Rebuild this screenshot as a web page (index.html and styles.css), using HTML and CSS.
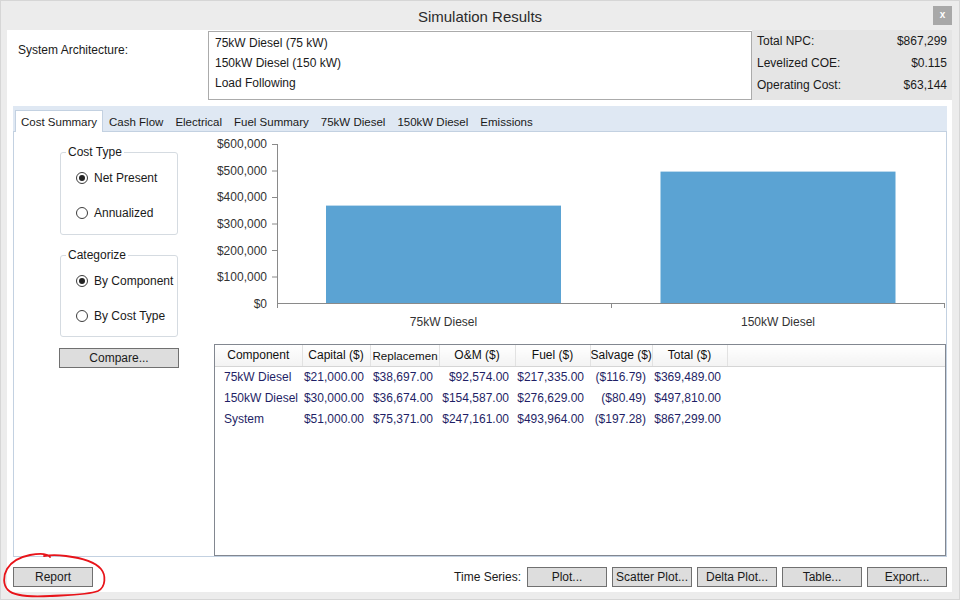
FILE: index.html
```html
<!DOCTYPE html>
<html>
<head>
<meta charset="utf-8">
<title>Simulation Results</title>
<link rel="stylesheet" href="styles.css">
</head>
<body>
<div class="window">
  <div class="titlebar">
    <span></span>
    <div class="title">Simulation Results</div>
    <div class="close">x</div>
  </div>
  <div class="panel">
    <div class="top">
      <div class="arch-label">System Architecture:</div>
      <div class="arch-box">
        <div class="arch-line">75kW Diesel (75 kW)</div>
        <div class="arch-line">150kW Diesel (150 kW)</div>
        <div class="arch-line">Load Following</div>
      </div>
      <div class="summary">
        <div class="srow"><span>Total NPC:</span><span>$867,299</span></div>
        <div class="srow"><span>Levelized COE:</span><span>$0.115</span></div>
        <div class="srow"><span>Operating Cost:</span><span>$63,144</span></div>
      </div>
    </div>
    <div class="tabs">
      <div class="tabstrip">
        <div class="tab active">Cost Summary</div>
        <div class="tab">Cash Flow</div>
        <div class="tab">Electrical</div>
        <div class="tab">Fuel Summary</div>
        <div class="tab">75kW Diesel</div>
        <div class="tab">150kW Diesel</div>
        <div class="tab">Emissions</div>
      </div>
      <div class="tabcontent">
        <div class="left">
          <fieldset class="group">
            <legend>Cost Type</legend>
            <div class="radio-row"><span class="radio checked"></span>Net Present</div>
            <div class="radio-row"><span class="radio"></span>Annualized</div>
          </fieldset>
          <fieldset class="group group2">
            <legend>Categorize</legend>
            <div class="radio-row"><span class="radio checked"></span>By Component</div>
            <div class="radio-row"><span class="radio"></span>By Cost Type</div>
          </fieldset>
          <div class="btn compare">Compare...</div>
        </div>
        <div class="right">
          <svg class="chart" width="732" height="212" viewBox="0 0 732 212">
            <g class="ylabels">
              <text x="53" y="12" dy=".35em">$600,000</text>
              <text x="53" y="38.6" dy=".35em">$500,000</text>
              <text x="53" y="65.2" dy=".35em">$400,000</text>
              <text x="53" y="91.8" dy=".35em">$300,000</text>
              <text x="53" y="118.4" dy=".35em">$200,000</text>
              <text x="53" y="145" dy=".35em">$100,000</text>
              <text x="53" y="171.5" dy=".35em">$0</text>
            </g>
            <rect class="bar" x="112" y="73.6" width="235" height="97.9"></rect>
            <rect class="bar" x="446.5" y="39.6" width="235" height="131.9"></rect>
            <g class="axis">
              <line x1="63.5" y1="12" x2="63.5" y2="176"></line>
              <line x1="63" y1="171.5" x2="731" y2="171.5"></line>
              <line x1="58" y1="12.5" x2="63" y2="12.5"></line>
              <line x1="58" y1="39" x2="63" y2="39"></line>
              <line x1="58" y1="65.5" x2="63" y2="65.5"></line>
              <line x1="58" y1="92" x2="63" y2="92"></line>
              <line x1="58" y1="118.5" x2="63" y2="118.5"></line>
              <line x1="58" y1="145" x2="63" y2="145"></line>
              <line x1="397.5" y1="171.5" x2="397.5" y2="176"></line>
              <line x1="730.5" y1="171.5" x2="730.5" y2="176"></line>
            </g>
            <g class="xlabels">
              <text x="229.5" y="190" dy=".35em">75kW Diesel</text>
              <text x="564" y="190" dy=".35em">150kW Diesel</text>
            </g>
          </svg>
          <div class="grid">
            <table>
              <colgroup>
                <col style="width:87px"><col style="width:68px"><col style="width:69px"><col style="width:76px"><col style="width:75px"><col style="width:62px"><col style="width:75px"><col>
              </colgroup>
              <thead>
                <tr>
                  <th>Component</th>
                  <th>Capital ($)</th>
                  <th class="clip"><div class="clipbox">Replacemen</div></th>
                  <th>O&amp;M ($)</th>
                  <th>Fuel ($)</th>
                  <th>Salvage ($)</th>
                  <th>Total ($)</th>
                  <th class="filler"></th>
                </tr>
              </thead>
              <tbody>
                <tr>
                  <td class="name">75kW Diesel</td>
                  <td>$21,000.00</td><td>$38,697.00</td><td>$92,574.00</td><td>$217,335.00</td><td>($116.79)</td><td>$369,489.00</td><td></td>
                </tr>
                <tr>
                  <td class="name">150kW Diesel</td>
                  <td>$30,000.00</td><td>$36,674.00</td><td>$154,587.00</td><td>$276,629.00</td><td>($80.49)</td><td>$497,810.00</td><td></td>
                </tr>
                <tr>
                  <td class="name">System</td>
                  <td>$51,000.00</td><td>$75,371.00</td><td>$247,161.00</td><td>$493,964.00</td><td>($197.28)</td><td>$867,299.00</td><td></td>
                </tr>
              </tbody>
            </table>
          </div>
        </div>
      </div>
    </div>
    <div class="bottombar">
      <div class="btn report">Report</div>
      <div class="spacer"></div>
      <div class="ts-label">Time Series:</div>
      <div class="btn ts">Plot...</div>
      <div class="btn ts">Scatter Plot...</div>
      <div class="btn ts">Delta Plot...</div>
      <div class="btn ts">Table...</div>
      <div class="btn ts">Export...</div>
    </div>
  </div>
  <svg class="annot" width="960" height="600" viewBox="0 0 960 600">
    <path d="M 50 557 C 47 553, 40 553, 30 555 C 20 557, 11 562, 7 569 C 3 576, 3 585, 8 590 C 14 596, 32 597, 50 596 C 68 595, 88 595, 98 591 C 106 587, 106 575, 101 569 C 95 562, 82 558, 66 556 C 58 555, 50 555, 44 556"/>
  </svg>
</div>
</body>
</html>
```

FILE: styles.css
```css
* { box-sizing: border-box; }

html, body {
  margin: 0;
  padding: 0;
}

body {
  font-family: "Liberation Sans", Arial, sans-serif;
  font-size: 12px;
  color: #111;
  background: #ececec;
}

.window {
  position: relative;
  width: 960px;
  height: 600px;
  border: 1px solid #d6d6d6;
  background: #ececec;
  display: flex;
  flex-direction: column;
}

.titlebar {
  height: 29px;
  display: grid;
  grid-template-columns: 1fr auto 1fr;
  align-items: center;
}

.title {
  font-size: 15px;
  color: #2b2b2b;
  padding-top: 1px;
}

.close {
  justify-self: end;
  align-self: start;
  margin-top: 5px;
  margin-right: 7px;
  width: 19px;
  height: 19px;
  background: #a8a8a8;
  color: #fff;
  font-size: 10px;
  font-weight: bold;
  line-height: 18px;
  text-align: center;
}

.panel {
  height: 562px;
  margin: 0 7px 7px 6px;
  background: #fff;
  display: flex;
  flex-direction: column;
}

/* top section */
.top {
  height: 70px;
  display: flex;
}

.arch-label {
  width: 201px;
  padding: 12px 0 0 11px;
  line-height: 16px;
  color: #1a1a1a;
}

.arch-box {
  width: 544px;
  height: 69px;
  margin-top: 1px;
  border: 1px solid #ababab;
  padding: 1px 6px;
}

.arch-line {
  line-height: 20px;
  color: #1a1a1a;
}

.summary {
  flex: 1;
  height: 70px;
  background: #e5e5e5;
  padding: 0 5px 4px 5px;
  display: grid;
  grid-template-rows: repeat(3, 1fr);
  align-items: center;
}

.srow {
  display: flex;
  justify-content: space-between;
  color: #1a1a1a;
}

/* tabs */
.tabs {
  flex: 1;
  margin: 6px 5px 0 6px;
  display: flex;
  flex-direction: column;
}

.tabstrip {
  height: 25px;
  background: #dfe8f3;
  display: flex;
  align-items: flex-end;
  padding-left: 2px;
}

.tab {
  height: 21px;
  padding: 2px 5px 0 5px;
  line-height: 18px;
  font-size: 11.5px;
  border: 1px solid transparent;
  border-bottom: none;
  color: #1a1a1a;
  white-space: nowrap;
}

.tab.active {
  background: #fff;
  border-color: #c3d1e1;
  height: 22px;
  margin-bottom: -1px;
  position: relative;
  z-index: 1;
}

.tabcontent {
  height: 426px;
  border: 1px solid #c3d1e1;
  background: #fff;
  display: flex;
}

.left {
  width: 200px;
  padding-top: 12px;
}

.group {
  margin: 0 0 0 46px;
  width: 118px;
  padding: 0 0 4px 0;
  border: 1px solid #d5dbe1;
  border-radius: 3px;
  min-width: 0;
}

.group legend {
  margin-left: 5px;
  padding: 0 2px;
  line-height: 16px;
  color: #1a1a1a;
}

.group2 {
  margin-top: 12px;
  padding-bottom: 3px;
}

.radio-row {
  height: 35px;
  display: flex;
  align-items: center;
  padding-left: 15px;
  color: #1a1a1a;
  white-space: nowrap;
}

.radio {
  width: 12px;
  height: 12px;
  border: 1px solid #3c3c3c;
  border-radius: 50%;
  background: #fff;
  margin-right: 6px;
  display: flex;
  align-items: center;
  justify-content: center;
  flex: none;
}

.radio.checked::after {
  content: "";
  width: 6px;
  height: 6px;
  border-radius: 50%;
  background: #222;
}

.btn {
  height: 20px;
  background: #dddddd;
  border: 1px solid #707070;
  text-align: center;
  line-height: 18px;
  color: #1a1a1a;
  white-space: nowrap;
}

.compare {
  width: 120px;
  margin: 11px 0 0 45px;
}

.right {
  width: 732px;
  display: flex;
  flex-direction: column;
}

.chart {
  display: block;
  flex: none;
}

.chart text {
  font-family: "Liberation Sans", Arial, sans-serif;
  font-size: 12px;
  fill: #333;
}

.ylabels text {
  text-anchor: end;
}

.xlabels text {
  text-anchor: middle;
}

.axis line {
  stroke: #8a8a8a;
  stroke-width: 1;
}

.bar {
  fill: #5ba3d3;
}

.grid {
  flex: 1;
  border: 1px solid #828790;
  background: #fff;
  overflow: hidden;
}

.grid table {
  width: 730px;
  table-layout: fixed;
  border-collapse: collapse;
}

.grid th {
  height: 21px;
  padding: 0;
  font-weight: normal;
  color: #111;
  text-align: center;
  background: linear-gradient(#ffffff, #f3f3f3);
  border-right: 1px solid #e2e2e2;
  border-bottom: 1px solid #d5d5d5;
  white-space: nowrap;
  overflow: hidden;
}

.grid th.clip {
  text-align: left;
  padding-left: 2px;
}

.clipbox {
  font-size: 11.6px;
  overflow: hidden;
  white-space: nowrap;
}

.grid th.filler {
  border-right: none;
}

.grid td {
  height: 21px;
  padding: 0 6px 0 0;
  text-align: right;
  color: #1f1f66;
  white-space: nowrap;
  overflow: hidden;
}

.grid td.name {
  text-align: left;
  padding: 0 0 0 9px;
}

/* bottom bar */
.bottombar {
  height: 35px;
  display: flex;
  align-items: flex-start;
  padding: 10px 5px 0 6px;
  gap: 5px;
}

.report {
  width: 80px;
}

.spacer {
  flex: 1;
}

.ts-label {
  line-height: 20px;
  margin-right: 1px;
  color: #1a1a1a;
}

.ts {
  width: 80px;
}

.annot {
  position: absolute;
  left: -1px;
  top: -1px;
  pointer-events: none;
}

.annot path {
  fill: none;
  stroke: #e8141a;
  stroke-width: 1.8;
  stroke-linecap: round;
  stroke-linejoin: round;
}
```
